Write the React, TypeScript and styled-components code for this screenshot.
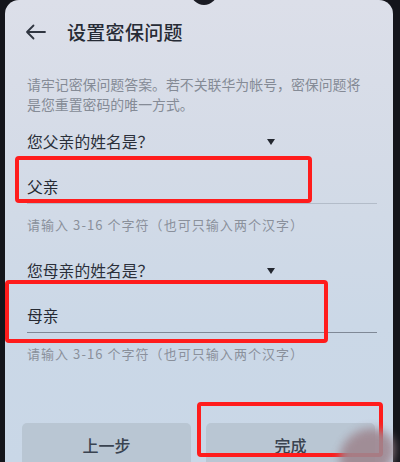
import React from 'react';
import styled, { createGlobalStyle } from 'styled-components';

const GlobalStyle = createGlobalStyle`
  * { box-sizing: border-box; }
  html, body {
    margin: 0;
    padding: 0;
    background: #15161c;
  }
  body {
    font-family: "Noto Sans CJK SC", "Noto Sans", sans-serif;
  }
`;

const BackIcon = () => (
  <svg width="21" height="16" viewBox="0 0 21 16" fill="none">
    <path d="M20 8H2M8.5 1.5L2 8l6.5 6.5" stroke="#2f3540" strokeWidth="1.8" strokeLinecap="round" strokeLinejoin="round" />
  </svg>
);

type FieldProps = {
  question: string;
  value: string;
  lineColor: string;
};

const QuestionField = ({ question, value, lineColor }: FieldProps) => (
  <FieldBlock>
    <QuestionRow>
      <span>{question}</span>
      <Caret />
    </QuestionRow>
    <AnswerInput $line={lineColor}>{value}</AnswerInput>
    <Hint>请输入 3-16 个字符（也可只输入两个汉字）</Hint>
  </FieldBlock>
);

const App = () => {
  return (
    <>
      <GlobalStyle />
      <Phone>
        <Screen>
          <Notch />
          <Header>
            <BackButton>
              <BackIcon />
            </BackButton>
            <Title>设置密保问题</Title>
          </Header>
          <Description>
            请牢记密保问题答案。若不关联华为帐号，密保问题将是您重置密码的唯一方式。
          </Description>
          <Fields>
            <QuestionField question="您父亲的姓名是？" value="父亲" lineColor="#b3bcc9" />
            <QuestionField question="您母亲的姓名是？" value="母亲" lineColor="#7f8896" />
          </Fields>
          <Actions>
            <ActionButton>上一步</ActionButton>
            <ActionButton>完成</ActionButton>
          </Actions>
        </Screen>
        <Mark $left={15} $top={156} $width={297} $height={47} />
        <Mark $left={5} $top={280} $width={323} $height={63} />
        <Mark $left={197} $top={402} $width={186} $height={55} />
        <Finger />
      </Phone>
    </>
  );
};

export default App;

const Phone = styled.div`
  position: relative;
  width: 400px;
  height: 462px;
  padding: 0 7px 0 5px;
  background: #14151b;
  overflow: hidden;
`;

const Screen = styled.div`
  position: relative;
  display: flex;
  flex-direction: column;
  height: 100%;
  border-radius: 14px 14px 0 0;
  background: linear-gradient(180deg, #dcdfe9 0%, #d4dbe7 35%, #cbd8e7 70%, #c9d7e7 100%);
  overflow: hidden;
`;

const Notch = styled.div`
  position: absolute;
  top: -20px;
  left: 186px;
  width: 26px;
  height: 25px;
  border-radius: 50%;
  background: #1b1c24;
`;

const Header = styled.div`
  display: flex;
  align-items: center;
  height: 62px;
  padding-left: 20px;
`;

const BackButton = styled.div`
  display: flex;
  align-items: center;
  width: 42px;
  height: 24px;
  margin-top: 1px;
`;

const Title = styled.h1`
  margin: 0;
  font-size: 19px;
  font-weight: 500;
  letter-spacing: 0.3px;
  color: #262b35;
`;

const Description = styled.p`
  margin: 13px 24px 0 22px;
  font-size: 13.9px;
  line-height: 19.5px;
  color: #858b96;
`;

const Fields = styled.div`
  display: flex;
  flex-direction: column;
  gap: 25px;
  margin-top: 16px;
  padding: 0 16px 0 22px;
`;

const FieldBlock = styled.div`
  display: flex;
  flex-direction: column;
`;

const QuestionRow = styled.div`
  display: flex;
  align-items: center;
  justify-content: space-between;
  width: 248px;
  height: 22px;
  font-size: 15.8px;
  color: #2a2f39;
`;

const Caret = styled.span`
  width: 0;
  height: 0;
  border-left: 4.5px solid transparent;
  border-right: 4.5px solid transparent;
  border-top: 6px solid #23272f;
  margin-top: 2px;
`;

const AnswerInput = styled.div<{ $line: string }>`
  padding: 24px 0 5px;
  font-size: 15.8px;
  line-height: 22px;
  color: #262a33;
  border-bottom: 1px solid ${({ $line }) => $line};
`;

const Hint = styled.div`
  margin-top: 12px;
  font-size: 13px;
  line-height: 18px;
  letter-spacing: 1.05px;
  color: #8a909b;
`;

const Actions = styled.div`
  display: flex;
  gap: 15px;
  margin-top: auto;
  margin-bottom: -5px;
  padding: 0 18px 0 17px;
`;

const ActionButton = styled.div`
  display: flex;
  align-items: center;
  justify-content: center;
  flex: 1;
  height: 44px;
  border-radius: 5px 5px 0 0;
  background: #b9c6d3;
  font-size: 16px;
  font-weight: 500;
  color: #3a4350;
`;

const Mark = styled.div<{ $left: number; $top: number; $width: number; $height: number }>`
  position: absolute;
  left: ${({ $left }) => $left}px;
  top: ${({ $top }) => $top}px;
  width: ${({ $width }) => $width}px;
  height: ${({ $height }) => $height}px;
  border: 4px solid #ff1c1c;
  border-radius: 4px;
`;

const Finger = styled.div`
  position: absolute;
  right: 4px;
  bottom: -16px;
  width: 58px;
  height: 48px;
  border-radius: 50%;
  background: #9e8790;
  filter: blur(5px);
  opacity: 0.9;
  transform: rotate(-35deg);
`;
